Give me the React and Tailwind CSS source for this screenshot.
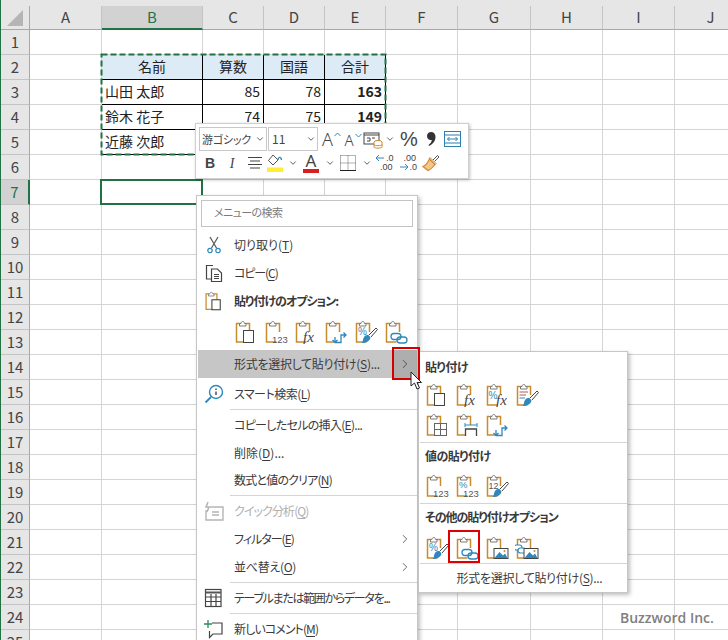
import { ChevronRight, ChevronDown } from "lucide-react";

const cols = ["A", "B", "C", "D", "E", "F", "G", "H", "I", "J"];
const rows = Array.from({ length: 25 }, (_, i) => i + 1);

const cells = {
  B2: { text: "名前", kind: "head" },
  C2: { text: "算数", kind: "head" },
  D2: { text: "国語", kind: "head" },
  E2: { text: "合計", kind: "head" },
  B3: { text: "山田 太郎", kind: "name" },
  C3: { text: "85", kind: "num" },
  D3: { text: "78", kind: "num" },
  E3: { text: "163", kind: "total" },
  B4: { text: "鈴木 花子", kind: "name" },
  C4: { text: "74", kind: "num" },
  D4: { text: "75", kind: "num" },
  E4: { text: "149", kind: "total" },
  B5: { text: "近藤 次郎", kind: "name" },
  C5: { kind: "num" },
  D5: { kind: "num" },
  E5: { kind: "num" },
};

const cellStyles = {
  head: "bg-[#ddebf7] text-center border-black",
  name: "text-left border-black",
  num: "text-right border-black",
  total: "text-right font-bold border-black",
};

const orange = "#c98b2f";
const blue = "#2f88bd";

// clipboard with a piece drawn over its lower right corner
const Clip = ({ children, paper, size = 24 }) => (
  <svg width={size} height={size} viewBox="0 0 24 24" fill="none">
    <path d="M6 3.5H2.5V22H12.5M11.5 3.5H15.5V12" stroke={orange} strokeWidth="1.5" />
    {paper}
    <path d="M5.5 6V3.5H7C7 .8 10.5 .8 10.5 3.5H12V6Z" fill="#fff" stroke="#7a7a7a" />
    {children}
  </svg>
);

const SmallText = ({ x = 9, y = 23, size = 9, color = "#555", children, italic }) => (
  <text
    x={x}
    y={y}
    fontSize={size}
    fill={color}
    fontFamily={italic ? "'Liberation Serif', serif" : "'Liberation Sans', sans-serif"}
    fontStyle={italic ? "italic" : "normal"}
  >
    {children}
  </text>
);

const Brush = () => (
  <g>
    <path d="M9 19.5C10 15.5 12 14.5 14.5 15L16.5 17.5C16 20.5 13 23 7.5 23C8.5 22 9 21 9 19.5Z" fill={blue} />
    <path d="M15 15L22 8L23.5 9.5L17 17" fill="#fff" stroke="#444" />
  </g>
);

const Keep = () => <rect x="9.5" y="10.5" width="10" height="12" fill="#fff" stroke="#444" />;
const Fx = () => <SmallText x={9} y={22} size={15} color="#444" italic>fx</SmallText>;
const N123 = () => <SmallText x={8} y={23} size={9.5}>123</SmallText>;
const Transpose = () => (
  <path d="M11 22.5H17V15H22M19.5 12.5L22 15L19.5 17.5M8.5 20L11 22.5L13.5 20M11 22.5V17" stroke={blue} strokeWidth="1.3" fill="none" />
);
const Link = () => (
  <g stroke={blue} strokeWidth="1.3" fill="none">
    <rect x="7" y="13.5" width="10" height="6" rx="3" />
    <rect x="13" y="17" width="10" height="6" rx="3" />
  </g>
);
const Picture = () => (
  <g>
    <rect x="9" y="12.5" width="14" height="10" fill="#fff" stroke="#444" />
    <path d="M9.5 22L14.5 16L18 19.5L20 17.5L22.5 22Z" fill={blue} />
    <circle cx="19.5" cy="15" r="1" fill={orange} />
  </g>
);

const pasteTop = [
  <Clip key="a" paper={<Keep />} />,
  <Clip key="b"><N123 /></Clip>,
  <Clip key="c"><Fx /></Clip>,
  <Clip key="d"><Transpose /></Clip>,
  <Clip key="e"><SmallText x={4} y={15} size={10} color={blue}>%</SmallText><Brush /></Clip>,
  <Clip key="f"><Link /></Clip>,
];

const subA = [
  <Clip key="a" paper={<Keep />} />,
  <Clip key="b"><Fx /></Clip>,
  <Clip key="c"><SmallText x={3.5} y={16} size={10} color={blue}>%</SmallText><SmallText x={11} y={22} size={15} color="#444" italic>fx</SmallText></Clip>,
  <Clip key="d"><path d="M4.5 9H13M4.5 12H11" stroke="#b05a5a" /><path d="M4.5 15H10" stroke={blue} /><Brush /></Clip>,
];
const subB = [
  <Clip key="a">
    <rect x="9.5" y="10.5" width="12" height="12" fill="#fff" stroke="#666" />
    <path d="M15.5 10.5V22.5M9.5 16.5H21.5" stroke="#666" />
  </Clip>,
  <Clip key="b">
    <path d="M10 12H22M10 10V14M22 10V14" stroke={blue} />
    <path d="M10.5 23V16H21.5V23" stroke="#444" strokeWidth="1.3" fill="#fff" />
  </Clip>,
  <Clip key="c"><Transpose /></Clip>,
];
const subC = [
  <Clip key="a"><N123 /></Clip>,
  <Clip key="b"><SmallText x={4} y={14} size={9.5} color={blue}>%</SmallText><N123 /></Clip>,
  <Clip key="c"><SmallText x={3.5} y={15} size={9}>12</SmallText><Brush /></Clip>,
];
const subD = [
  <Clip key="a"><SmallText x={4} y={15} size={10} color={blue}>%</SmallText><Brush /></Clip>,
  <Clip key="b"><Link /></Clip>,
  <Clip key="c"><Picture /></Clip>,
  <Clip key="d">
    <g stroke={blue} strokeWidth="1.2" fill="#fff">
      <rect x="-1" y="9" width="8" height="5" rx="2.5" />
      <rect x="3" y="12" width="8" height="5" rx="2.5" />
    </g>
    <Picture />
  </Clip>,
];

const Scissors = () => (
  <svg width="24" height="24" viewBox="0 0 24 24" fill="none">
    <path d="M8 4L14.5 15M16 4L9.5 15" stroke="#555" strokeWidth="1.2" />
    <circle cx="8" cy="17.5" r="2.2" stroke={blue} strokeWidth="1.2" />
    <circle cx="16" cy="17.5" r="2.2" stroke={blue} strokeWidth="1.2" />
  </svg>
);
const CopyIcon = () => (
  <svg width="24" height="24" viewBox="0 0 24 24" fill="none" stroke="#444" strokeWidth="1.2">
    <path d="M11 4.5H4.5V18H9" />
    <path d="M9.5 8H15.5L19.5 12V20.5H9.5Z" fill="#fff" />
    <path d="M12 13.5H17M12 15.5H17M12 17.5H17" strokeWidth="1" />
  </svg>
);
const PasteIcon = () => <Clip size={20} paper={<rect x="9.5" y="10.5" width="10" height="12" fill="#fff" stroke="#444" strokeWidth="1.3" />} />;
const Lookup = () => (
  <svg width="24" height="24" viewBox="0 0 24 24" fill="none">
    <circle cx="14" cy="10" r="6.5" stroke={blue} strokeWidth="1.4" />
    <path d="M9 15L3.5 20.5" stroke={blue} strokeWidth="1.8" />
    <path d="M14 9.5V13" stroke="#333" strokeWidth="1.3" />
    <path d="M14 6.5V8" stroke="#333" strokeWidth="1.3" />
  </svg>
);
const QuickAnalysis = () => (
  <svg width="24" height="24" viewBox="0 0 24 24" fill="none" stroke="#b5b5b5" strokeWidth="1.4">
    <path d="M8 8H21V21H4V11" />
    <path d="M10 16H17M10 13H17" />
    <path d="M6 3L4 8H7L5 13" strokeWidth="1.6" />
  </svg>
);
const TableIcon = () => (
  <svg width="24" height="24" viewBox="0 0 24 24" fill="none" stroke="#444" strokeWidth="1.2">
    <rect x="3.5" y="3.5" width="15.5" height="17" />
    <path d="M3.5 6.5H19" strokeWidth="2" stroke="#555" />
    <path d="M3.5 11H19M3.5 15.5H19M9 8V20.5M14 8V20.5" />
  </svg>
);
const CommentIcon = () => (
  <svg width="24" height="24" viewBox="0 0 24 24" fill="none">
    <path d="M10 6H20V17H11L7.5 20.5V14" stroke="#444" strokeWidth="1.2" />
    <path d="M6 3V11M2 7H10" stroke="#2f8a57" strokeWidth="1.3" />
  </svg>
);

const Label = ({ text, accel, suffix = "", bold, muted, track = "" }) => (
  <span className={`${bold ? "font-bold" : ""} ${muted ? "text-[#b0b0b0]" : "text-[#3a3a3a]"} ${track} whitespace-nowrap`}>
    {text}
    {accel && (
      <>
        (<span className="underline underline-offset-2">{accel}</span>)
      </>
    )}
    {suffix}
  </span>
);

const MenuItem = ({ icon, arrow, h = "h-[28px]", ...label }) => (
  <div className={`flex items-center ${h}`}>
    <div className="w-[33px] flex justify-center shrink-0 pl-[1px]">{icon}</div>
    <div className="flex-1 pl-[4px]">
      <Label {...label} />
    </div>
    {arrow && <ChevronRight className="w-[14px] h-[14px] text-[#555] mr-[5px]" strokeWidth={1.5} />}
  </div>
);

const Sep = () => <div className="h-px bg-[#d4d4d4] ml-[33px] my-[1px]" />;

const ContextMenu = () => (
  <div className="absolute left-[196px] top-[195px] w-[222px] h-[460px] bg-white border border-[#c6c6c6] shadow-[2px_2px_4px_rgba(0,0,0,0.25)]">
    <div className="mx-[4px] mt-[4px] mb-[4px] h-[27px] border border-[#c4c4c4] flex items-center pl-[12px] pb-[3px] text-[#7b7b7b] text-[11px] tracking-[-0.6px]">
      メニューの検索
    </div>
    <MenuItem icon={<Scissors />} text="切り取り" accel="T" />
    <MenuItem icon={<CopyIcon />} text="コピー" accel="C" track="tracking-[-1.1px]" />
    <MenuItem icon={<PasteIcon />} text="貼り付けのオプション:" bold track="tracking-[-1px]" />
    <div className="h-[35px] flex items-center pl-[33px] pb-[2px]">
      {pasteTop.map((icon, i) => (
        <div key={i} className="w-[30px] flex justify-center pl-[1px]">{icon}</div>
      ))}
    </div>
    <div className="h-[28px] flex items-stretch ml-[1px]">
      <div className="w-[195px] bg-[#c6c6c6] flex items-center pl-[36px]">
        <Label text="形式を選択して貼り付け" accel="S" suffix="..." track="tracking-[-0.3px]" />
      </div>
      <div className="flex-1 bg-[#aeaeae] flex items-center justify-center">
        <ChevronRight className="w-[14px] h-[14px] text-[#444]" strokeWidth={1.5} />
      </div>
    </div>
    <MenuItem icon={<Lookup />} text="スマート検索" accel="L" h="h-[30px] pt-[2px]" track="tracking-[-0.5px]" />
    <Sep />
    <MenuItem text="コピーしたセルの挿入" accel="E" suffix="..." track="tracking-[-0.7px]" />
    <MenuItem text="削除" accel="D" suffix="..." h="h-[27px]" />
    <MenuItem text="数式と値のクリア" accel="N" track="tracking-[-0.8px]" />
    <Sep />
    <MenuItem icon={<QuickAnalysis />} text="クイック分析" accel="Q" muted track="tracking-[-0.9px]" />
    <MenuItem text="フィルター" accel="E" arrow track="tracking-[-1px]" />
    <MenuItem text="並べ替え" accel="O" arrow track="tracking-[-0.3px]" />
    <Sep />
    <MenuItem icon={<TableIcon />} text="テーブルまたは範囲からデータを..." track="tracking-[-1.3px]" />
    <Sep />
    <MenuItem icon={<CommentIcon />} text="新しいコメント" accel="M" track="tracking-[-0.9px]" />
  </div>
);

const IconRow = ({ icons, h }) => (
  <div className={`${h} flex items-center pl-[2px]`}>
    {icons.map((icon, i) => (
      <div key={i} className="w-[30px] flex justify-center pl-[1px]">{icon}</div>
    ))}
  </div>
);

const SubHead = ({ children, track = "" }) => (
  <div className={`h-[26px] flex items-center pl-[6px] font-bold text-[#3a3a3a] ${track}`}>{children}</div>
);

const SubSep = () => <div className="h-px bg-[#d4d4d4] ml-[1px]" />;

const SubMenu = () => (
  <div className="absolute left-[418px] top-[351px] w-[210px] h-[242px] bg-white border border-[#c6c6c6] shadow-[2px_2px_4px_rgba(0,0,0,0.25)]">
    <div className="pt-[2px]" />
    <SubHead track="tracking-[-0.5px]">貼り付け</SubHead>
    <IconRow icons={subA} h="h-[30px]" />
    <IconRow icons={subB} h="h-[30px]" />
    <div className="h-[1px] mt-[1px]" />
    <SubSep />
    <SubHead track="tracking-[-0.6px]">値の貼り付け</SubHead>
    <IconRow icons={subC} h="h-[34px]" />
    <SubSep />
    <SubHead track="tracking-[-1px]">その他の貼り付けオプション</SubHead>
    <div className="relative">
      <IconRow icons={subD} h="h-[33px] pt-[3px]" />
      <div className="absolute left-[29px] top-0 w-[32px] h-[33px] border-[2px] border-[#e00000]" />
    </div>
    <SubSep />
    <div className="h-[28px] flex items-center justify-center pl-[13px]">
      <Label text="形式を選択して貼り付け" accel="S" suffix="..." track="tracking-[-0.3px]" />
    </div>
  </div>
);

const Chev = () => <ChevronDown className="w-[10px] h-[10px] text-[#444] shrink-0" strokeWidth={2} />;

const GrowA = ({ down }) => (
  <span className="flex items-start text-[#444] leading-none font-['Noto_Sans'] font-light">
    <span className={down ? "text-[15px] mt-[2px]" : "text-[18px]"}>A</span>
    <svg width="7" height="5" viewBox="0 0 7 5" fill="none" className="mt-[2px] ml-[1px]">
      <path d={down ? "M.5 1L3.5 4L6.5 1" : "M.5 4L3.5 1L6.5 4"} stroke={blue} />
    </svg>
  </span>
);

const CondFormat = () => (
  <svg width="20" height="20" viewBox="0 0 20 20" fill="none">
    <rect x="1" y="4" width="15" height="11" stroke="#444" />
    <path d="M1 6H16" stroke="#444" />
    <path d="M4 9H7V12H4M9 9H12" stroke="#444" />
    <ellipse cx="15" cy="13" rx="4" ry="1.5" fill="#fff" stroke={orange} />
    <path d="M11 13V18C11 19.5 19 19.5 19 18V13M11 15.5C11 17 19 17 19 15.5" fill="#fff" stroke={orange} />
  </svg>
);
const Comma = () => (
  <svg width="10" height="16" viewBox="0 0 10 16">
    <path d="M5 1C8 1 9.5 3 9.5 6C9.5 10 6.5 13.5 3 15L2.5 14C4.5 12.5 5.5 11 5.8 9C3 9.5 1 7.5 1 5C1 2.5 3 1 5 1Z" fill="#333" />
  </svg>
);
const Wrap = () => (
  <svg width="17" height="16" viewBox="0 0 17 16" fill="none">
    <rect x=".5" y=".5" width="16" height="15" stroke="#2a7fb0" />
    <path d="M.5 4H16.5M.5 12H16.5" stroke="#2a7fb0" />
    <path d="M3.5 8H13.5M5.5 6L3.5 8L5.5 10M11.5 6L13.5 8L11.5 10" stroke="#2a7fb0" />
  </svg>
);
const Align = () => (
  <svg width="16" height="14" viewBox="0 0 16 14" stroke="#444">
    <path d="M1 1.5H15M3 5H13M1 8.5H15M3 12H13" />
  </svg>
);
const Bucket = () => (
  <svg width="18" height="20" viewBox="0 0 18 20" fill="none">
    <path d="M6 2L1.5 7.5L6 12L11 7Z" stroke="#555" fill="#fff" />
    <path d="M11 7C11 4 14 3 14.5 7" stroke={blue} strokeWidth="1.4" />
    <rect x="0" y="14.5" width="16" height="4.5" fill="#ffee33" />
  </svg>
);
const FontA = () => (
  <span className="flex flex-col items-center leading-none text-[#444] font-['Noto_Sans']">
    <span className="text-[17px] h-[15px] leading-[15px]">A</span>
    <span className="block w-[16px] h-[4px] bg-[#d81e1e] mt-[1px]" />
  </span>
);
const Borders = () => (
  <svg width="16" height="16" viewBox="0 0 16 16" fill="none">
    <path d="M.5 .5H15.5V15M.5 .5V15M8 .5V15M.5 8H15.5" stroke="#666" strokeDasharray="1 1" />
    <path d="M0 15.5H16" stroke="#222" />
  </svg>
);
const Decimals = ({ more }) => (
  <span className="relative block w-[18px] h-[18px]">
    <svg width="18" height="18" viewBox="0 0 18 18" fill="none" className="absolute inset-0">
      {more ? (
        <path d="M0 13H8M5 10L8 13L5 16" stroke={blue} />
      ) : (
        <path d="M8 4H0M3 1L0 4L3 7" stroke={blue} />
      )}
    </svg>
    <span className={`absolute text-[#444] text-[9px] leading-none font-['Liberation_Sans'] ${more ? "left-[4px] top-0" : "left-[10px] top-0"}`}>
      {more ? ".00" : ".0"}
    </span>
    <span className={`absolute text-[#444] text-[9px] leading-none font-['Liberation_Sans'] ${more ? "left-[10px] top-[9px]" : "left-[4px] top-[9px]"}`}>
      {more ? ".0" : ".00"}
    </span>
  </span>
);
const Painter = () => (
  <svg width="18" height="18" viewBox="0 0 18 18" fill="none">
    <path d="M11 6L15.5 1.5L17 3L12.5 7.5" fill="#fff" stroke="#555" />
    <path d="M8 3.5L14 9.5L12.5 11L7 5Z" fill="#fff" stroke={orange} />
    <path d="M7.5 5L13 10.5C11 13 9 15.5 6 16.5L1 12.5C4 11.5 6 8 7.5 5Z" fill="#f3c78c" stroke="#d4862a" strokeWidth="1.2" />
  </svg>
);

const Tool = ({ w, children }) => (
  <div className={`${w} flex items-center justify-center shrink-0`}>{children}</div>
);

const MiniToolbar = () => (
  <div className="absolute left-[195px] top-[123px] w-[274px] h-[56px] bg-white border border-[#cfcfcf] shadow-[1px_1px_3px_rgba(0,0,0,0.25)] px-[3px] pt-[3px]">
    <div className="flex h-[24px]">
      <div className="w-[68px] border border-[#c8c8c8] flex items-center justify-between pl-[2px] pr-[1px] text-[#444] text-[11px] tracking-[-0.2px] whitespace-nowrap">
        游ゴシック
        <Chev />
      </div>
      <div className="w-[50px] ml-[1px] border border-[#c8c8c8] flex items-center justify-between pl-[3px] pr-[1px] text-[#444]">
        11
        <Chev />
      </div>
      <Tool w="w-[25px] ml-[1px]"><GrowA /></Tool>
      <Tool w="w-[18px]"><GrowA down /></Tool>
      <Tool w="w-[22px]"><CondFormat /></Tool>
      <Tool w="w-[12px]"><Chev /></Tool>
      <Tool w="w-[26px]"><span className="text-[20px] text-[#444] font-['Liberation_Sans'] leading-none">%</span></Tool>
      <Tool w="w-[18px]"><Comma /></Tool>
      <Tool w="w-[24px]"><Wrap /></Tool>
    </div>
    <div className="flex h-[24px] items-center">
      <Tool w="w-[22px]"><span className="font-bold text-[14px] text-[#444] font-['Liberation_Sans']">B</span></Tool>
      <Tool w="w-[22px]"><span className="italic text-[14px] text-[#444] font-['Liberation_Serif']">I</span></Tool>
      <Tool w="w-[23px]"><Align /></Tool>
      <Tool w="w-[20px]"><Bucket /></Tool>
      <Tool w="w-[13px]"><Chev /></Tool>
      <Tool w="w-[24px]"><FontA /></Tool>
      <Tool w="w-[13px]"><Chev /></Tool>
      <Tool w="w-[24px]"><Borders /></Tool>
      <Tool w="w-[13px]"><Chev /></Tool>
      <Tool w="w-[24px]"><Decimals /></Tool>
      <Tool w="w-[23px]"><Decimals more /></Tool>
      <Tool w="w-[22px]"><Painter /></Tool>
    </div>
  </div>
);

const Cursor = () => (
  <svg width="14" height="20" viewBox="0 0 14 20" className="absolute left-[410px] top-[371px]">
    <path d="M1 1V15L4.5 12L7 18L9.5 17L7 11.5H11.5Z" fill="#fff" stroke="#222" />
  </svg>
);

const Marquee = () => (
  <svg width="287" height="103" className="absolute left-[100px] top-[53px]" fill="none">
    <rect x="1.5" y="1.5" width="284" height="100" stroke="#217346" strokeWidth="2" strokeDasharray="6 3" />
  </svg>
);

const Sheet = () => (
  <div className="grid grid-cols-[29px_72px_101px_61px_61px_61px_72px_73px_72px_72px_72px] grid-rows-[24px_repeat(25,25px)] w-max">
    <div className="bg-[#e6e6e6] border-r border-b border-[#a8a8a8] flex items-center justify-center">
      <svg width="18" height="18" viewBox="0 0 18 18"><path d="M17 1V17H1Z" fill="#b5b5b5" /></svg>
    </div>
    {cols.map((c) => (
      <div
        key={c}
        className={`flex items-center justify-center text-[15px] border-r border-[#c4c4c4] ${
          c === "B"
            ? "bg-[#d2d2d2] text-[#217346] border-b-2 border-b-[#217346]"
            : "bg-[#e6e6e6] text-[#444] border-b border-b-[#a8a8a8]"
        }`}
      >
        {c}
      </div>
    ))}
    {rows.map((r) => (
      <div key={r} className="contents">
        <div
          className={`flex items-center justify-center text-[15px] border-b border-[#c4c4c4] ${
            r === 7
              ? "bg-[#d2d2d2] text-[#217346] border-r-2 border-r-[#217346]"
              : "bg-[#e6e6e6] text-[#444] border-r border-r-[#a8a8a8]"
          }`}
        >
          {r}
        </div>
        {cols.map((c) => {
          const cell = cells[c + r];
          return (
            <div
              key={c}
              className={`border-r border-b pl-[3px] pr-[3px] text-[14px] leading-[22px] text-[#222] whitespace-nowrap overflow-hidden ${
                cell ? cellStyles[cell.kind] : "border-[#d4d4d4]"
              }`}
            >
              {cell?.text}
            </div>
          );
        })}
      </div>
    ))}
  </div>
);

export default function App() {
  return (
    <div className="relative w-[728px] h-[640px] overflow-hidden bg-white font-['Noto_Sans_CJK_JP','Noto_Sans',sans-serif] text-[12px] [font-feature-settings:'palt']">
      <div className="border-l border-[#217346] h-full">
        <div className="h-[6px] bg-[#e6e6e6]" />
        <Sheet />
      </div>

      {/* copy marquee and active cell */}
      <Marquee />
      <div className="absolute left-[100px] top-[179px] w-[103px] h-[26px] border-2 border-[#217346]" />

      <MiniToolbar />
      <ContextMenu />
      <SubMenu />

      <div className="absolute left-[392px] top-[347px] w-[28px] h-[33px] border-[2px] border-[#d40000]" />
      <Cursor />

      <div className="absolute left-[620px] top-[607px] text-[14px] font-semibold text-[#808080] font-['Open_Sans',sans-serif]">
        Buzzword Inc.
      </div>
    </div>
  );
}
